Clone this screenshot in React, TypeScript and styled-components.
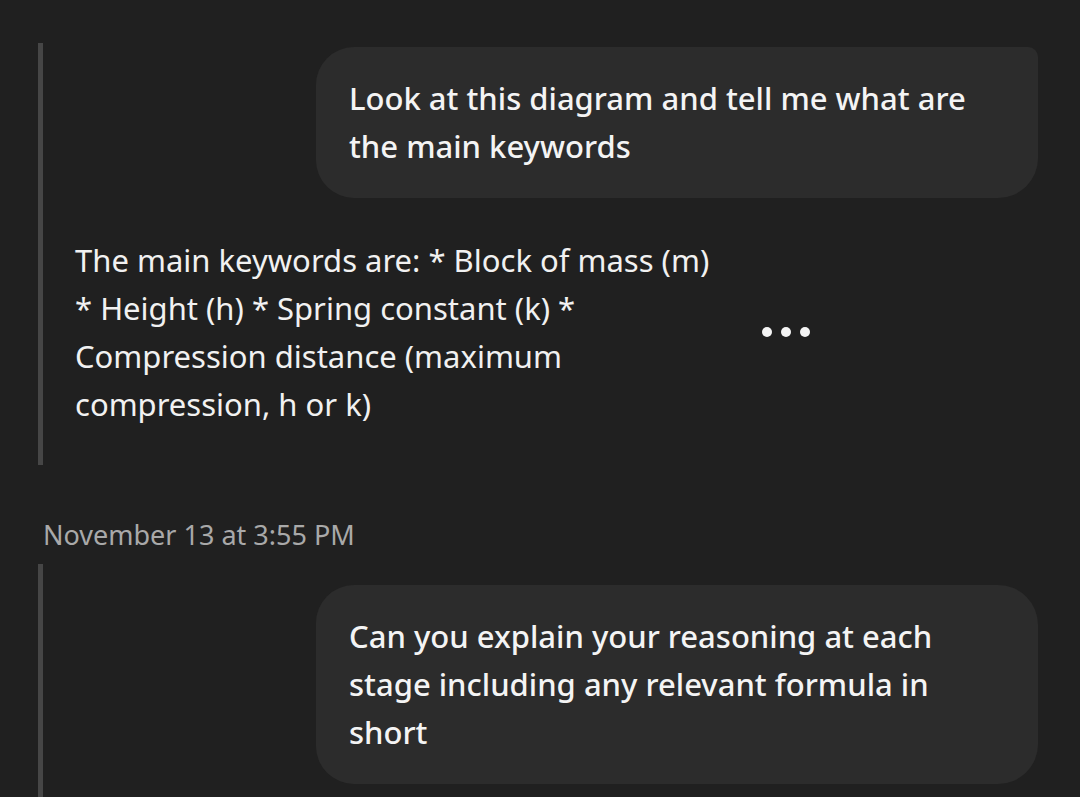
import React from "react";
import styled, { createGlobalStyle } from "styled-components";

const Global = createGlobalStyle`
  html, body { margin: 0; padding: 0; background: #202020; }
  body { font-family: "Noto Sans", "Open Sans", sans-serif; color: #f1f1f1; }
`;

const Page = styled.div`
  width: 1080px;
  height: 797px;
  overflow: hidden;
  background: #202020;
  display: flex;
  flex-direction: column;
  padding-top: 43px;
  box-sizing: border-box;
`;

const Thread = styled.div<{ $height?: number }>`
  display: flex;
  margin-left: 38px;
  border-left: 5px solid #464646;
  ${(p) => (p.$height ? `height: ${p.$height}px;` : "flex: 1;")}
  box-sizing: border-box;
  flex-direction: column;
`;

const BubbleRow = styled.div<{ $top: number }>`
  display: flex;
  justify-content: flex-end;
  padding-top: ${(p) => p.$top}px;
  padding-right: 42px;
`;

const Bubble = styled.div<{ $tr: number }>`
  width: 722px;
  box-sizing: border-box;
  background: #2c2c2c;
  border-radius: 38px ${(p) => p.$tr}px 40px 38px;
  padding: 27px 30px 28px 33px;
  font-size: 31px;
  line-height: 48px;
  font-weight: 500;
  color: #f4f4f4;
  white-space: nowrap;
`;

const ResponseRow = styled.div`
  display: flex;
  align-items: center;
  margin-top: 38px;
  padding-left: 32px;
`;

const ResponseText = styled.div`
  width: 655px;
  font-size: 31px;
  line-height: 48px;
  font-weight: 400;
  color: #f1f1f1;
  white-space: nowrap;
`;

const Dots = styled.div`
  display: flex;
  gap: 9px;
  margin-left: 32px;
`;

const Dot = styled.span`
  width: 10px;
  height: 10px;
  border-radius: 50%;
  background: #f4f4f4;
`;

const Timestamp = styled.div`
  margin: 54px 0 0 43px;
  height: 32px;
  font-size: 27px;
  line-height: 32px;
  color: #a9a9a9;
`;

const SecondThread = styled(Thread)`
  margin-top: 13px;
`;

export default function App() {
  return (
    <>
      <Global />
      <Page>
        <Thread $height={422}>
          <BubbleRow $top={4}>
            <Bubble $tr={10}>
              Look at this diagram and tell me what are
              <br />
              the main keywords
            </Bubble>
          </BubbleRow>
          <ResponseRow>
            <ResponseText>
              The main keywords are: * Block of mass (m)
              <br />* Height (h) * Spring constant (k) *
              <br />
              Compression distance (maximum
              <br />
              compression, h or k)
            </ResponseText>
            <Dots>
              <Dot />
              <Dot />
              <Dot />
            </Dots>
          </ResponseRow>
        </Thread>
        <Timestamp>November 13 at 3:55 PM</Timestamp>
        <SecondThread>
          <BubbleRow $top={21}>
            <Bubble $tr={40}>
              Can you explain your reasoning at each
              <br />
              stage including any relevant formula in
              <br />
              short
            </Bubble>
          </BubbleRow>
        </SecondThread>
      </Page>
    </>
  );
}
